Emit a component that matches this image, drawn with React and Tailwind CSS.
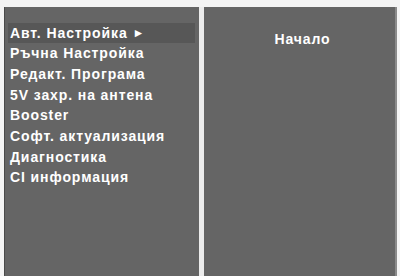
export default function App() {
  const items = [
    "Ръчна Настройка",
    "Редакт. Програма",
    "5V захр. на антена",
    "Booster",
    "Софт. актуализация",
    "Диагностика",
    "CI информация",
  ];
  return (
    <div
      className="w-[400px] h-[276px] bg-[#f4f4f4] pt-[7px] pl-[4px] flex overflow-hidden"
      style={{ fontFamily: '"Liberation Sans", Arial, sans-serif' }}
    >
      <div className="w-[195px] h-full bg-[#656565] border-l border-[#4a4a4a] pt-[16px] pl-[3px] pr-[4px]">
        <div className="h-[20px] bg-[#575757] pl-[2px] flex items-center text-white font-bold text-[14px] tracking-[0.9px] leading-none">
          Авт. Настройка <span className="ml-[5px] text-[12px]">►</span>
        </div>
        {items.map((t) => (
          <div
            key={t}
            className="h-[20.7px] pl-[2px] flex items-center text-white font-bold text-[14px] tracking-[0.9px] leading-none"
          >
            {t}
          </div>
        ))}
      </div>
      <div className="w-[5px] h-full bg-[#ececec]" />
      <div className="w-[193px] h-full bg-[#656565] border-r-2 border-[#8a8a8a] pt-[25px] flex justify-center">
        <div className="text-white font-bold text-[14px] tracking-[0.9px] leading-none h-[16px] pl-[6px]">Начало</div>
      </div>
    </div>
  );
}
